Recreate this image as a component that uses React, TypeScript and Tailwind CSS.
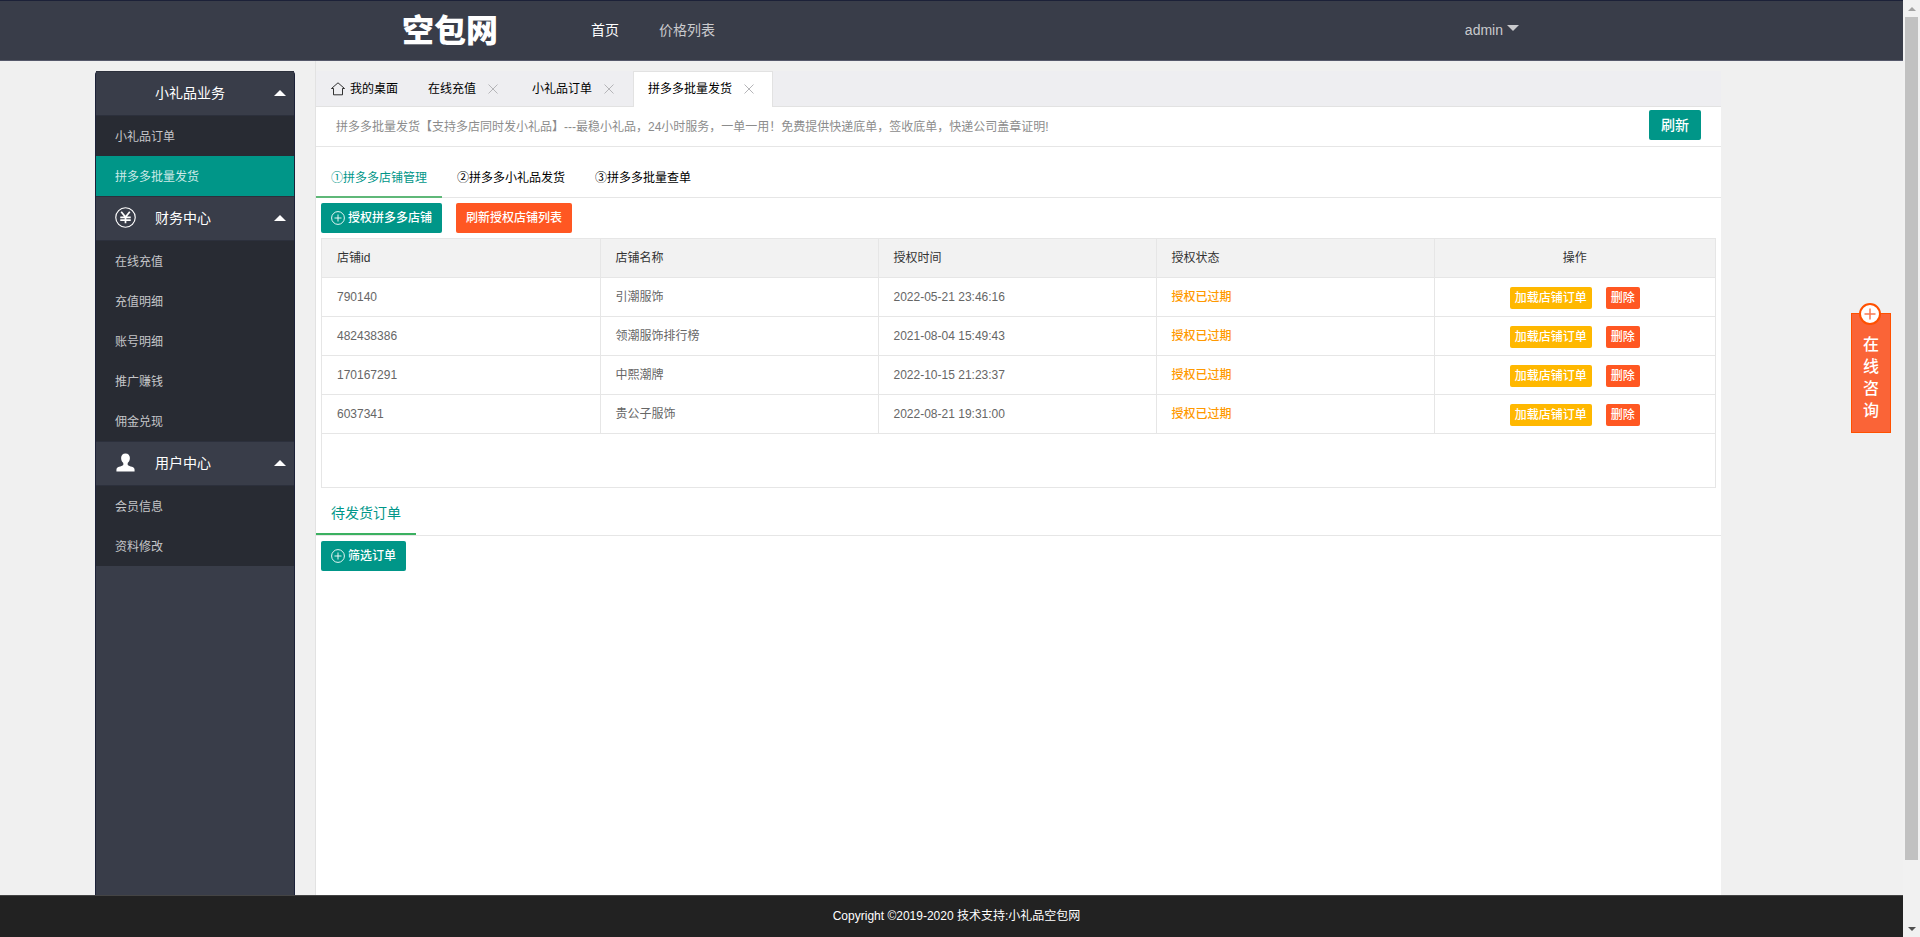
import React from 'react';
import clsx from 'clsx';

interface MenuGroup {
  title: string;
  icon?: 'yen' | 'user';
  items: string[];
}

interface Shop {
  id: string;
  name: string;
  time: string;
  status: string;
}

const ACTIVE_PAGE = '拼多多批量发货';

const menu: MenuGroup[] = [
  { title: '小礼品业务', items: ['小礼品订单', '拼多多批量发货'] },
  { title: '财务中心', icon: 'yen', items: ['在线充值', '充值明细', '账号明细', '推广赚钱', '佣金兑现'] },
  { title: '用户中心', icon: 'user', items: ['会员信息', '资料修改'] },
];

const openTabs = ['在线充值', '小礼品订单', '拼多多批量发货'];

const steps = ['①拼多多店铺管理', '②拼多多小礼品发货', '③拼多多批量查单'];

const shops: Shop[] = [
  { id: '790140', name: '引潮服饰', time: '2022-05-21 23:46:16', status: '授权已过期' },
  { id: '482438386', name: '领潮服饰排行榜', time: '2021-08-04 15:49:43', status: '授权已过期' },
  { id: '170167291', name: '中熙潮牌', time: '2022-10-15 21:23:37', status: '授权已过期' },
  { id: '6037341', name: '贵公子服饰', time: '2022-08-21 19:31:00', status: '授权已过期' },
];

const YenIcon = () => (
  <svg className="w-[21px] h-[21px]" viewBox="0 0 22 22" fill="none" stroke="currentColor">
    <circle cx="11" cy="11" r="10.2" strokeWidth="1.2" />
    <path d="M6.500 5l4.500 5.500L15.500 5M11 10.500V17M5.500 10.800h11M5.500 13.800h11" strokeWidth="1.8" />
  </svg>
);

const UserIcon = () => (
  <svg className="w-[21px] h-[21px]" viewBox="0 0 22 22" fill="currentColor">
    <path d="M11 1.500c-2.900 0-4.600 2-4.600 4.700 0 2.300 1 4.200 2.300 5.200v2.100c-.8.900-2.700 1.300-4.500 2C2.300 16.200 1.500 17.200 1.500 18.600V20.500h19v-1.900c0-1.400-.8-2.400-2.700-3.100-1.800-.7-3.700-1.100-4.500-2v-2.100c1.300-1 2.300-2.900 2.300-5.200C15.600 3.500 13.900 1.500 11 1.500z" />
  </svg>
);

const HomeIcon = () => (
  <svg className="w-3.5 h-3.5" viewBox="0 0 14 14" fill="none" stroke="currentColor" strokeWidth="0.8">
    <path d="M0.500 6.500L7 0.800l6.500 5.700M0.500 6.500H2.500V12.800h9V6.500h2" />
  </svg>
);

const PlusCircleIcon = () => (
  <svg className="w-3.5 h-3.5" viewBox="0 0 14 14" fill="none" stroke="currentColor" strokeWidth="0.9">
    <circle cx="7" cy="7" r="6.4" />
    <path d="M7 3.500v7M3.500 7h7" />
  </svg>
);

const CloseIcon = () => (
  <svg className="w-2.5 h-2.5" viewBox="0 0 10 10" fill="none" stroke="currentColor" strokeWidth="1">
    <path d="M0.500 0.500l9 9M9.500 0.500l-9 9" />
  </svg>
);

const Header = () => (
  <header className="h-[61px] pl-[401px] pr-[384px] flex items-center bg-[#393d49] border-t border-t-[#1c2138] border-b border-b-[#55586a] text-sm text-[#c9cacd]">
    <a href="#" className="w-[98px] text-center text-[32px] leading-10 font-black text-white">空包网</a>
    <nav className="flex gap-10 ml-[92px] pb-0.5">
      <a href="#" className="text-white">首页</a>
      <a href="#">价格列表</a>
    </nav>
    <button type="button" className="ml-auto pb-0.5 flex items-center gap-1">
      admin
      <svg className="w-3 h-1.5 mb-1" viewBox="0 0 12 6" fill="currentColor"><path d="M0 0h12L6 6z" /></svg>
    </button>
  </header>
);

const Sidebar = () => (
  <aside className="w-[200px] shrink-0 mt-2.5 bg-[#393d49] rounded-t-sm border-x border-[#1c2138]">
    {menu.map(group => (
      <section key={group.title}>
        <button type="button" className="w-full h-[45px] pl-[19px] pr-2 pb-0.5 flex items-center text-sm text-white border-y border-[#2c303c]">
          <span className="w-10 shrink-0">
            {group.icon === 'yen' && <YenIcon />}
            {group.icon === 'user' && <UserIcon />}
          </span>
          {group.title}
          <svg className="w-3 h-1.5 ml-auto" viewBox="0 0 12 6" fill="currentColor"><path d="M0 6h12L6 0z" /></svg>
        </button>
        <ul className="bg-[#282b33] text-xs text-[#c5c6c9]">
          {group.items.map(item => (
            <li key={item}>
              <a
                href="#"
                className={clsx('h-10 pl-[19px] pt-0.5 flex items-center', item === ACTIVE_PAGE && 'bg-[#009688] text-[#cdeae7]')}
              >
                {item}
              </a>
            </li>
          ))}
        </ul>
      </section>
    ))}
  </aside>
);

const PageTabs = () => (
  <div className="h-9 mt-2.5 flex bg-[#eeeef1] border-b border-[#e2e2e2] text-xs text-black">
    <button type="button" className="px-[15px] flex items-center gap-[5px]">
      <HomeIcon />
      我的桌面
    </button>
    {openTabs.map(tab => (
      <div
        key={tab}
        className={clsx(
          'flex items-center gap-3',
          tab === ACTIVE_PAGE ? 'h-9 pl-3.5 pr-[18px] pb-0.5 bg-white border-x border-t border-[#e2e2e2]' : 'pl-[15px] pr-[19px]'
        )}
      >
        <button type="button">{tab}</button>
        <button type="button" aria-label="关闭" className="text-[#b5b5b8]">
          <CloseIcon />
        </button>
      </div>
    ))}
  </div>
);

const ShopTable = () => (
  <div className="mt-[5px] mx-[5px] h-[250px] border border-[#e6e6e6]">
    <table className="w-full table-fixed border-collapse text-xs text-[#666]">
      <thead>
        <tr className="h-[38px] bg-[#f2f2f2] text-left text-[#333] border-b border-[#e6e6e6]">
          <th className="w-[278px] px-[15px] font-normal border-r border-[#e6e6e6]">店铺id</th>
          <th className="w-[278px] px-[15px] font-normal border-r border-[#e6e6e6]">店铺名称</th>
          <th className="w-[278px] px-[15px] font-normal border-r border-[#e6e6e6]">授权时间</th>
          <th className="w-[278px] px-[15px] font-normal border-r border-[#e6e6e6]">授权状态</th>
          <th className="px-[15px] font-normal text-center">操作</th>
        </tr>
      </thead>
      <tbody>
        {shops.map(shop => (
          <tr key={shop.id} className="h-[39px] border-b border-[#e6e6e6]">
            <td className="px-[15px] border-r border-[#e6e6e6]">{shop.id}</td>
            <td className="px-[15px] border-r border-[#e6e6e6]">{shop.name}</td>
            <td className="px-[15px] border-r border-[#e6e6e6]">{shop.time}</td>
            <td className="px-[15px] border-r border-[#e6e6e6] font-medium text-[#ff9900]">{shop.status}</td>
            <td className="px-[15px]">
              <div className="pt-0.5 flex justify-center gap-3.5 font-medium text-white">
                <button type="button" className="h-[22px] px-[5px] rounded-xs bg-[#ffb800]">加载店铺订单</button>
                <button type="button" className="h-[22px] px-[5px] rounded-xs bg-[#ff5722]">删除</button>
              </div>
            </td>
          </tr>
        ))}
      </tbody>
    </table>
  </div>
);

const Main = () => (
  <main className="flex-1 ml-5 flex flex-col border-l border-[#e2e2e2]">
    <PageTabs />
    <div className="flex-1 bg-white">
      <div className="h-10 pl-5 pr-5 flex items-center justify-between border-b border-[#e6e6e6]">
        <p className="text-xs text-[#8c8c8c]">
          拼多多批量发货【支持多店同时发小礼品】---最稳小礼品，24小时服务，一单一用！免费提供快递底单，签收底单，快递公司盖章证明!
        </p>
        <button type="button" className="h-[30px] mb-1 px-3 rounded-xs bg-[#009688] text-sm font-medium text-white">刷新</button>
      </div>

      <div className="mt-2.5 h-[41px] flex border-b border-[#e6e6e6] text-xs text-black">
        {steps.map((step, index) => (
          <button
            key={step}
            type="button"
            className={clsx('h-[41px] px-[15px] pt-0.5 border-b-2', index === 0 ? 'border-[#5fb878] text-[#009688]' : 'border-transparent')}
          >
            {step}
          </button>
        ))}
      </div>
      <div className="mt-[5px] mx-[5px] flex gap-3.5 text-xs font-medium text-white">
        <button type="button" className="h-[30px] px-2.5 flex items-center gap-[3px] rounded-xs bg-[#009688]">
          <PlusCircleIcon />
          授权拼多多店铺
        </button>
        <button type="button" className="h-[30px] px-2.5 rounded-xs bg-[#ff5722]">刷新授权店铺列表</button>
      </div>
      <ShopTable />

      <div className="mt-[7px] h-[41px] flex border-b border-[#e6e6e6] text-sm">
        <button type="button" className="h-10 px-[15px] pb-0.5 border-b-2 border-[#3bb060] text-[#009688]">待发货订单</button>
      </div>
      <div className="mt-[5px] mx-[5px] flex text-xs font-medium text-white">
        <button type="button" className="h-[30px] px-2.5 flex items-center gap-[3px] rounded-xs bg-[#009688]">
          <PlusCircleIcon />
          筛选订单
        </button>
      </div>
    </div>
  </main>
);

const ChatWidget = () => (
  <button
    type="button"
    className="fixed right-[29px] top-[313px] w-10 h-[120px] pt-5 flex flex-col items-center border border-[#ff5000] bg-[#fa6437] text-base leading-[22px] font-medium text-white"
  >
    <svg className="absolute -top-[11px] left-[7px] w-[22px] h-[22px]" viewBox="0 0 22 22" fill="none">
      <circle cx="11" cy="11" r="10" fill="#fff" stroke="#ff5000" strokeWidth="2" />
      <path d="M11 5.500v11M5.500 11h11" stroke="#fa7850" strokeWidth="1.5" />
    </svg>
    {['在', '线', '咨', '询'].map(char => (
      <span key={char}>{char}</span>
    ))}
  </button>
);

const ScrollBar = () => (
  <div className="w-[17px] shrink-0 flex flex-col items-center bg-[#f1f1f1]">
    <div className="h-[17px] flex items-center">
      <svg className="w-2 h-1" viewBox="0 0 8 4" fill="#a3a3a3"><path d="M0 4h8L4 0z" /></svg>
    </div>
    <div className="w-[13px] h-[843px] bg-[#c1c1c1]" />
    <div className="h-[17px] mt-auto flex items-center">
      <svg className="w-2 h-1" viewBox="0 0 8 4" fill="#505050"><path d="M0 0h8L4 4z" /></svg>
    </div>
  </div>
);

const App: React.FC = () => {
  return (
    <div className="min-h-screen flex bg-[#f0f0f0] font-['Liberation_Sans','Noto_Sans_CJK_SC',sans-serif]">
      <div className="flex-1 flex flex-col">
        <Header />
        <div className="flex-1 flex pl-[95px] pr-[182px]">
          <Sidebar />
          <Main />
        </div>
        <footer className="h-[42px] pl-[10px] pb-0.5 flex items-center justify-center border-t border-[#444] bg-[#222] text-xs text-white">
          Copyright ©2019-2020 技术支持:小礼品空包网
        </footer>
      </div>
      <ScrollBar />
      <ChatWidget />
    </div>
  );
};

export default App;
